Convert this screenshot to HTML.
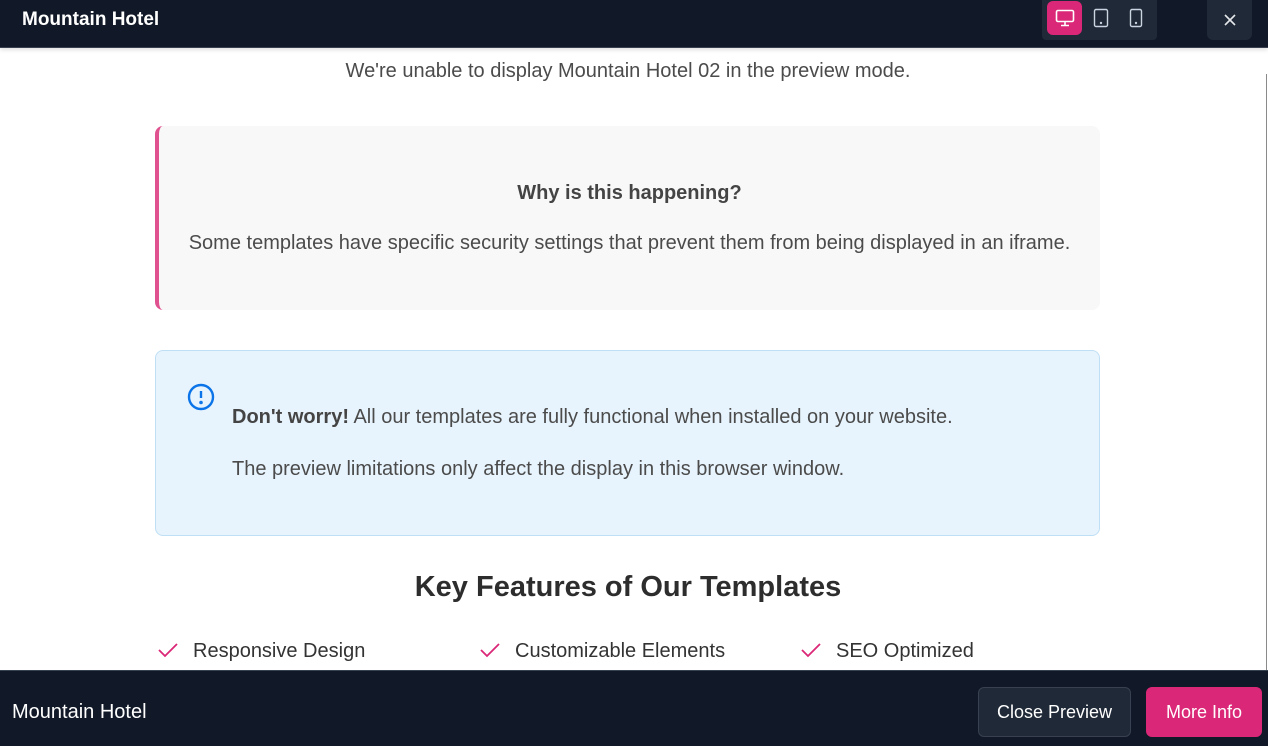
<!DOCTYPE html>
<html><head><meta charset="utf-8"><style>
*{box-sizing:border-box;margin:0;padding:0}
body{width:1268px;height:746px;overflow:hidden;background:#fff;font-family:"Liberation Sans",sans-serif;position:relative;color:#4b4b4b}
.top{position:absolute;left:0;top:0;width:1268px;height:48px;background:#111827;border-bottom:1px solid #374151;box-shadow:0 2px 4px rgba(0,0,0,.12);z-index:2}
.top .t{position:absolute;left:22px;top:9px;color:#fff;font-weight:bold;font-size:19px}
.grp{position:absolute;left:1042px;top:0;width:115px;height:40px;background:#1f2937;border-radius:0 0 4px 4px}
.b{position:absolute;top:1px;width:35px;height:34px;border-radius:6px;display:flex;align-items:center;justify-content:center}
.x{position:absolute;left:1207px;top:0;width:45px;height:40px;background:#1f2937;border-radius:0 0 6px 6px;display:flex;align-items:center;justify-content:center}
.msg{position:absolute;top:60px;left:0;width:1256px;text-align:center;font-size:20px;color:#4b4b4b}
.why{position:absolute;left:155px;top:126px;width:945px;height:184px;background:#f8f8f8;border-left:4px solid #e0528f;border-radius:8px;text-align:center}
.why h3{font-size:20px;margin-top:56px;color:#444;font-weight:bold}
.why p{font-size:20px;margin-top:27px}
.info{position:absolute;left:155px;top:350px;width:945px;height:186px;background:#e8f4fd;border:1px solid #bfdff5;border-radius:8px}
.info p{position:absolute;left:76px;font-size:20px}
h2{position:absolute;top:571px;left:0;width:1256px;text-align:center;font-size:29px;color:#2d2d2d;font-weight:bold}
.f{position:absolute;top:640px;font-size:20px;color:#333}
.f svg{position:absolute;left:-36px;top:2px}
.bot{position:absolute;left:0;top:670px;width:1268px;height:76px;background:#111827;border-top:1px solid #374151}
.bot .t{position:absolute;left:12px;top:30px;color:#fff;font-size:20px;font-weight:500}
.btn{position:absolute;top:16px;height:50px;border-radius:6px;color:#fff;font-size:18px;display:flex;align-items:center;justify-content:center}
.sb{position:absolute;right:1px;top:74px;width:1px;height:596px;background:#8a8a8a}
</style></head><body>
<div class="top"><div class="t">Mountain Hotel</div>
<div class="grp">
<div class="b" style="left:5px;background:#db2777"><svg width="20" height="18" viewBox="0 0 20 18" fill="none" stroke="#fff" stroke-width="1.6"><rect x="1.5" y="1.5" width="17" height="11" rx="1.5"/><path d="M10 12.5v3.5M6 16.5h8"/></svg></div>
<div class="b" style="left:41px"><svg width="16" height="20" viewBox="0 0 16 20" fill="none" stroke="#cbd5e1" stroke-width="1.4"><rect x="1.5" y="1.5" width="13" height="17" rx="1.5"/><circle cx="8" cy="15" r=".5"/></svg></div>
<div class="b" style="left:76px"><svg width="14" height="20" viewBox="0 0 14 20" fill="none" stroke="#cbd5e1" stroke-width="1.4"><rect x="1.5" y="1.5" width="11" height="17" rx="1.5"/><circle cx="7" cy="15" r=".5"/></svg></div>
</div>
<div class="x"><svg width="14" height="14" viewBox="0 0 14 14" stroke="#e5e7eb" stroke-width="1.6"><path d="M2 2l10 10M12 2L2 12"/></svg></div>
</div>
<div class="sb"></div>
<div class="msg">We're unable to display Mountain Hotel 02 in the preview mode.</div>
<div class="why"><h3>Why is this happening?</h3><p>Some templates have specific security settings that prevent them from being displayed in an iframe.</p></div>
<div class="info">
<svg style="position:absolute;left:31px;top:32px" width="28" height="28" viewBox="0 0 28 28" fill="none" stroke="#0a74e8" stroke-width="2.4"><circle cx="14" cy="14" r="12"/><path d="M14 8v7"/><circle cx="14" cy="19.5" r=".6" fill="#0a74e8"/></svg>
<p style="top:55px"><b style="color:#444">Don't worry!</b> All our templates are fully functional when installed on your website.</p>
<p style="top:107px">The preview limitations only affect the display in this browser window.</p>
</div>
<h2>Key Features of Our Templates</h2>
<div class="f" style="left:193px"><svg width="22" height="16" viewBox="0 0 22 16" fill="none" stroke="#db2777" stroke-width="1.8"><path d="M2 8l6 6L20 2"/></svg>Responsive Design</div>
<div class="f" style="left:515px"><svg width="22" height="16" viewBox="0 0 22 16" fill="none" stroke="#db2777" stroke-width="1.8"><path d="M2 8l6 6L20 2"/></svg>Customizable Elements</div>
<div class="f" style="left:836px"><svg width="22" height="16" viewBox="0 0 22 16" fill="none" stroke="#db2777" stroke-width="1.8"><path d="M2 8l6 6L20 2"/></svg>SEO Optimized</div>
<div class="bot"><div class="t">Mountain Hotel</div>
<div class="btn" style="left:978px;width:153px;background:#1f2937;border:1px solid #374151">Close Preview</div>
<div class="btn" style="left:1146px;width:116px;background:#db2777">More Info</div>
</div>
</body></html>
